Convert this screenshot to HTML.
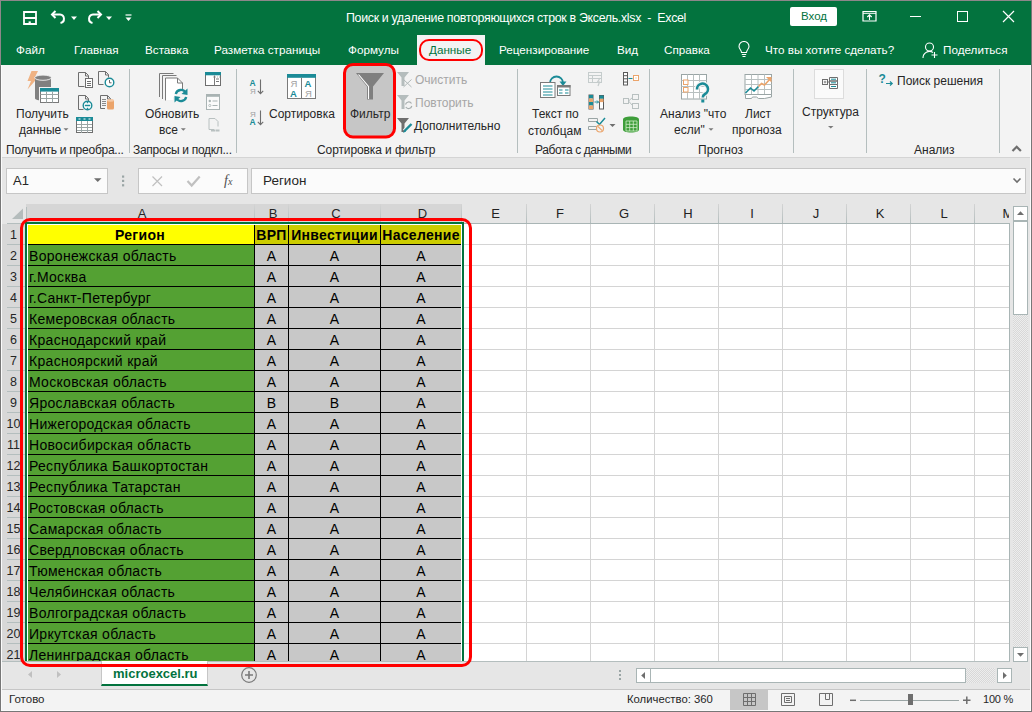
<!DOCTYPE html>
<html><head><meta charset="utf-8"><style>
*{box-sizing:border-box;margin:0;padding:0}
html,body{width:1032px;height:712px;overflow:hidden;background:#777;font-family:"Liberation Sans",sans-serif}
#win{position:absolute;left:0;top:0;width:1032px;height:712px}
.abs{position:absolute}
#title{position:absolute;left:1px;top:1px;width:1030px;height:34px;background:#03733e}
#tabs{position:absolute;left:1px;top:35px;width:1030px;height:30px;background:#03733e}
#ribbon{position:absolute;left:1px;top:65px;width:1030px;height:92px;background:#f3f3f3}
#ribline{position:absolute;left:1px;top:157px;width:1030px;height:1px;background:#d4d4d4}
#fbar{position:absolute;left:1px;top:158px;width:1030px;height:503px;background:#e6e6e6}
#sheetbar{position:absolute;left:1px;top:661px;width:1030px;height:28px;background:#e6e6e6}
#statline{position:absolute;left:1px;top:689px;width:1030px;height:1px;background:#c6c6c6}
#status{position:absolute;left:1px;top:690px;width:1030px;height:20px;background:#f3f3f3}
.t{position:absolute;white-space:pre;font-size:12px;line-height:14px}
.tw{color:#fff}
#gridwrap{position:absolute;left:0;top:0;width:1032px;height:712px}
.ch{position:absolute;top:204px;height:19px;overflow:hidden;background:#e6e6e6;color:#222;padding-left:3px;font-size:13px;line-height:19px;text-align:center}
.ch.sel{background:#d6d6d6;color:#262626}
.rh{position:absolute;left:1px;width:25px;height:21px;background:#d8d8d8;color:#262626;font-size:12.5px;line-height:23px;text-align:center}
.vl{position:absolute;top:224px;width:1px;height:437px;background:#d4d4d4}
.hl{position:absolute;left:26px;width:983px;height:1px;background:#d4d4d4}
.c{position:absolute;height:20px;font-size:14px;line-height:22px;letter-spacing:0.3px;white-space:pre;color:#000;overflow:hidden}
.hdrA{background:#ffff00;font-weight:bold;text-align:center}
.hdrB{background:#cccc00;font-weight:bold;text-align:center}
.ga{left:26px;width:228px;background:#54a133;padding-left:3px}
.gb{background:#c8c8c8;text-align:center}
.bv{position:absolute;top:225px;width:1px;height:436px;background:#000}
.bh{position:absolute;left:27px;width:434px;height:1px;background:#000}
#grid-bg{position:absolute;left:26px;top:224px;width:983px;height:437px;background:#fff}
#selbox{position:absolute;left:25px;top:222px;width:439px;height:439px;border:2px solid #03733e;border-bottom:none}
#selin{position:absolute;left:27px;top:224px;width:435px;height:437px;border:1px solid #fff;border-bottom:none}
#redbox{position:absolute;left:20px;top:218px;width:452px;height:449px;border:3px solid #ff0000;border-radius:10px}
.tab{top:43px;font-size:11.7px}
.rt{color:#262626;font-size:12px}
.hatch{background:repeating-conic-gradient(#d8d8d8 0 25%,#ededed 0 50%) 0 0/2px 2px}
.hdiv{position:absolute;top:204px;width:1px;height:19px;background:linear-gradient(#d4d4d4,#b4bebe)}
#edgeT{position:absolute;left:0;top:0;width:1032px;height:1px;background:#8d878a}
#edgeL{position:absolute;left:0;top:0;width:1px;height:66px;background:#8d878a}
.hiV{position:absolute;top:65px;width:1px;height:646px;background:#fbfbfb}
.hiH{position:absolute;left:1px;top:710px;width:1030px;height:1px;background:#fbfbfb}

</style></head><body>
<div id="win">
<div id="title"></div>
<div id="tabs"></div>
<!-- QAT -->
<svg class="abs" style="left:22px;top:10px" width="16" height="16" viewBox="0 0 16 16">
 <path d="M2 2h12v12h-12z" fill="none" stroke="#fff" stroke-width="1.8"/>
 <path d="M1.5 8h13" fill="none" stroke="#fff" stroke-width="2"/>
 <path d="M6.6 14v-2.6h2.2v2.6z" fill="#fff"/>
</svg>
<svg class="abs" style="left:50px;top:9px" width="18" height="16" viewBox="0 0 18 16">
 <path d="M5.5 2L2 5.5L5.5 9" fill="none" stroke="#fff" stroke-width="2"/>
 <path d="M2.5 5.5H10a4.3 4.3 0 0 1 0.5 8.5" fill="none" stroke="#fff" stroke-width="2"/>
</svg>
<svg class="abs" style="left:70px;top:16px" width="8" height="5" viewBox="0 0 8 5"><path d="M1 0.5h6L4 4z" fill="#fff"/></svg>
<svg class="abs" style="left:85px;top:9px" width="18" height="16" viewBox="0 0 18 16">
 <path d="M12.5 2L16 5.5L12.5 9" fill="none" stroke="#fff" stroke-width="2"/>
 <path d="M15.5 5.5H8a4.3 4.3 0 0 0 -0.5 8.5" fill="none" stroke="#fff" stroke-width="2"/>
</svg>
<svg class="abs" style="left:104.5px;top:16px" width="8" height="5" viewBox="0 0 8 5"><path d="M1 0.5h6L4 4z" fill="#fff"/></svg>
<svg class="abs" style="left:125px;top:14px" width="7" height="8" viewBox="0 0 7 8"><path d="M0.5 1h6" stroke="#fff" stroke-width="1.2"/><path d="M0.5 3.5h6L3.5 7z" fill="#fff"/></svg>
<div class="t tw" style="left:346px;top:11px;font-size:12.4px;letter-spacing:-0.32px">Поиск и удаление повторяющихся строк в Эксель.xlsx  -  Excel</div>
<div class="abs" style="left:790px;top:7px;width:47px;height:19px;background:#fff;border-radius:2px"></div>
<div class="t" style="left:801px;top:9px;font-size:11.5px;color:#03733e">Вход</div>
<svg class="abs" style="left:862px;top:10px" width="15" height="12" viewBox="0 0 15 12">
 <path d="M1 1.5h13v9.5h-13z" fill="none" stroke="#fff" stroke-width="1.2"/>
 <path d="M1 3.3h13" stroke="#fff" stroke-width="1"/>
 <path d="M7.5 10v-5M5.3 7l2.2-2.2L9.7 7" fill="none" stroke="#fff" stroke-width="1.1"/>
</svg>
<div class="abs" style="left:910px;top:16px;width:11px;height:1px;background:#fff"></div>
<div class="abs" style="left:957px;top:11px;width:11px;height:11px;border:1px solid #fff"></div>
<svg class="abs" style="left:1002px;top:10px" width="13" height="13" viewBox="0 0 13 13"><path d="M1 1L12 12M12 1L1 12" stroke="#fff" stroke-width="1.2"/></svg>
<!-- tabs -->
<div class="t tw tab" style="left:16px">Файл</div>
<div class="t tw tab" style="left:74px">Главная</div>
<div class="t tw tab" style="left:145px">Вставка</div>
<div class="t tw tab" style="left:214px">Разметка страницы</div>
<div class="t tw tab" style="left:348px">Формулы</div>
<div class="abs" style="left:417px;top:35px;width:68px;height:30px;background:#f3f3f3"></div>
<div class="t tab" style="left:429px;color:#03733e">Данные</div>
<div class="abs" style="left:419px;top:39px;width:64px;height:22px;border:2.5px solid #ff0000;border-radius:10px"></div>
<div class="t tw tab" style="left:499px">Рецензирование</div>
<div class="t tw tab" style="left:617px">Вид</div>
<div class="t tw tab" style="left:664px">Справка</div>
<svg class="abs" style="left:738px;top:41px" width="12" height="17" viewBox="0 0 12 17">
 <path d="M3.5 11.5C3.5 9 1 8 1 5.5a5 5 0 0 1 10 0C11 8 8.5 9 8.5 11.5z" fill="none" stroke="#fff" stroke-width="1.1"/>
 <path d="M3.8 13.5h4.4M4.5 15.5h3" stroke="#fff" stroke-width="1.1"/>
</svg>
<div class="t tw tab" style="left:765px">Что вы хотите сделать?</div>
<svg class="abs" style="left:922px;top:42px" width="17" height="17" viewBox="0 0 17 17">
 <circle cx="7.5" cy="5" r="4" fill="none" stroke="#fff" stroke-width="1.1"/>
 <path d="M1 16a6.5 6.5 0 0 1 10-5.5" fill="none" stroke="#fff" stroke-width="1.1"/>
 <path d="M12.5 10v6M9.5 13h6" stroke="#fff" stroke-width="1.1"/>
</svg>
<div class="t tw tab" style="left:943px">Поделиться</div>
<div id="ribbon"></div>
<div id="ribline"></div>
<svg class="abs" style="left:0;top:0" width="1032" height="160" viewBox="0 0 1032 160">
<!-- separators -->
<g fill="#b4bebe">
<rect x="129" y="69" width="1" height="84"/>
<rect x="236" y="69" width="1" height="84"/>
<rect x="517" y="69" width="1" height="84"/>
<rect x="649" y="69" width="1" height="84"/>
<rect x="793" y="69" width="1" height="84"/>
<rect x="866" y="69" width="1" height="84"/>
<rect x="999" y="69" width="1" height="84"/>
</g>
<!-- G1 big: lightning, cylinder, table -->
<path d="M31.5 71 L38 71 L34.5 78 L37.5 78 L27.5 89.5 L31 81 L27.5 81 Z" fill="#efb283"/>
<rect x="35" y="77.5" width="16" height="21" fill="#808080"/>
<ellipse cx="43" cy="98.5" rx="8" ry="2" fill="#808080"/>
<ellipse cx="43" cy="77.7" rx="8.3" ry="2.6" fill="#808080" stroke="#f3f3f3" stroke-width="0.9"/>
<rect x="39" y="87" width="21" height="17" fill="#f3f3f3"/>
<rect x="40.5" y="88.5" width="18" height="14" fill="#fff" stroke="#7a7a7a" stroke-width="1"/>
<rect x="40" y="88" width="19" height="3.6" fill="#1b8b97"/>
<path d="M46.5 91.5v11M52.5 91.5v11M40.5 94.5h18M40.5 98.5h18" stroke="#9aa5a5" stroke-width="1"/>
<!-- G1 small icons -->
<g fill="none" stroke="#6e6e6e" stroke-width="1">
 <path d="M84.5 86.5h-6v-14h7l3 3v2.5"/>
 <path d="M85.5 72.5v3.5h3"/>
 <path d="M103.5 84.5h-5v-13h7l3 3v3"/>
 <path d="M105.5 71.5v3.5h3"/>
 <path d="M83.5 109.5h-5v-14h7l3 3v2.5"/>
 <path d="M85.5 95.5v3.5h3"/>
 <path d="M105 108.5h-4.5v-13h7l3 3v3"/>
 <path d="M107.5 95.5v3.5h3"/>
</g>
<rect x="85.5" y="78.5" width="7" height="9" fill="#fff" stroke="#6e6e6e" stroke-width="1"/>
<path d="M87 81.5h4M87 83.5h4M87 85.5h4" stroke="#6e6e6e" stroke-width="1"/>
<path d="M102 99.5h4M102 101.5h4M102 103.5h4M102 105.5h4" stroke="#8a8a8a" stroke-width="1"/>
<circle cx="109.5" cy="82.5" r="4.3" fill="#fff" stroke="#1b8b97" stroke-width="1.4"/>
<path d="M109.5 80v2.8h2" fill="none" stroke="#555" stroke-width="0.9"/>
<circle cx="87.5" cy="105.5" r="4.3" fill="#fff" stroke="#1b8b97" stroke-width="1.4"/>
<path d="M84.8 105.5h5.4M87.5 101.8v1.5M87.5 107.8v1.5" stroke="#1b8b97" stroke-width="1.4"/>
<rect x="107" y="99.5" width="7" height="10" rx="1.5" fill="#eba46b"/>
<ellipse cx="110.5" cy="100.5" rx="3.5" ry="1.2" fill="#f5c9a5"/>
<rect x="76.5" y="117.5" width="16" height="15" fill="#fff" stroke="#6e6e6e" stroke-width="1"/>
<rect x="76" y="117" width="17" height="4" fill="#1b8b97"/>
<path d="M78.5 119h2M83.5 119h2M88.5 119h2" stroke="#fff" stroke-width="1"/>
<path d="M81.5 121v11.5M87.5 121v11.5M77 124.5h15M77 127.5h15M77 130.5h15" stroke="#9aa5a5" stroke-width="1" shape-rendering="crispEdges"/>
<!-- G2 big: stacked pages + refresh -->
<g fill="none" stroke="#7a7a7a" stroke-width="1">
 <path d="M159.5 97v-23.5h14"/>
 <path d="M162.5 99v-23.5h14"/>
 <path d="M165.5 100.5v-22.5h12l5 5v10" fill="#fff"/>
 <path d="M177.5 78v5h5"/>
</g>
<rect x="166" y="90" width="7" height="10" fill="#fff"/>
<circle cx="181" cy="95.5" r="6.8" fill="#f3f3f3"/>
<path d="M175.8 94 A5.3 5.3 0 0 1 185.5 92.5" fill="none" stroke="#1b8b97" stroke-width="2.3"/>
<path d="M186.2 97 A5.3 5.3 0 0 1 176.5 98.5" fill="none" stroke="#1b8b97" stroke-width="2.3"/>
<path d="M187.5 88.5 L187.5 95 L181.5 94 Z" fill="#1b8b97"/>
<path d="M174.5 102.5 L174.5 96 L180.5 97 Z" fill="#1b8b97"/>
<!-- G2 small -->
<rect x="205.5" y="72.5" width="15" height="13" fill="#fff" stroke="#6e6e6e" stroke-width="1"/>
<rect x="205" y="72" width="16" height="3.3" fill="#1b8b97"/>
<path d="M214.5 75.5v10M216 79h3M216 81.5h3" stroke="#7a7a7a" stroke-width="1"/>
<path d="M213 77h1M215 77h1M217 77h1M219 77h1" stroke="#999" stroke-width="0.8"/>
<rect x="206.5" y="94.5" width="13" height="15" fill="#fafafa" stroke="#a9b3b3" stroke-width="1"/>
<rect x="206" y="94" width="14" height="2.8" fill="#a9b3b3"/>
<circle cx="209.8" cy="101" r="1.2" fill="#a9b3b3"/>
<circle cx="209.8" cy="105.5" r="1.1" fill="none" stroke="#a9b3b3" stroke-width="0.8"/>
<path d="M212.5 101h5M212.5 105.5h5" stroke="#a9b3b3" stroke-width="1"/>
<path d="M214 129.5h-5v-11h6l3 3v5" fill="none" stroke="#b8c0c0" stroke-width="1"/>
<path d="M211 130.5h4M215.5 130.5h4" stroke="#b8c0c0" stroke-width="2"/>
<!-- G3 sort small -->
<g font-family="Liberation Sans" font-weight="bold" font-size="8.5">
 <text x="249.5" y="86" fill="#1b8b97">A</text>
 <text x="250" y="93.5" fill="#a0a0a0" font-weight="normal" font-size="8">Я</text>
 <text x="250" y="117.3" fill="#a0a0a0" font-weight="normal" font-size="8">Я</text>
 <text x="249.5" y="125" fill="#1b8b97">A</text>
</g>
<path d="M260.5 79.5v14M257.8 90.8l2.7 2.8l2.7-2.8" fill="none" stroke="#6e6e6e" stroke-width="1.1"/>
<path d="M260.5 110.5v14M257.8 121.8l2.7 2.8l2.7-2.8" fill="none" stroke="#6e6e6e" stroke-width="1.1"/>
<!-- G3 big sort -->
<rect x="287.5" y="74.5" width="28" height="24" fill="#fff" stroke="#7a7a7a" stroke-width="1"/>
<rect x="287" y="74" width="29" height="3.8" fill="#1b8b97"/>
<path d="M301.5 77.5v21" stroke="#7a7a7a" stroke-width="1"/>
<g font-family="Liberation Sans" font-size="9.5">
 <text x="290.5" y="87" fill="#a0a0a0">Я</text>
 <text x="290" y="97" fill="#1b8b97" font-weight="bold">A</text>
 <text x="304.5" y="87" fill="#1b8b97" font-weight="bold">A</text>
 <text x="305" y="97" fill="#a0a0a0">Я</text>
</g>
<!-- G3 filter button -->
<rect x="346" y="66" width="47" height="70" rx="5" fill="#c6c6c6"/>
<path d="M356 73h28l-11 13.5v13h-6v-13z" fill="#7f7f7f"/>
<path d="M358.5 74.5l10 12v12.5" fill="none" stroke="#fff" stroke-width="1.1"/>
<rect x="344.5" y="64.5" width="50" height="72.5" rx="8.5" fill="none" stroke="#ff0000" stroke-width="3"/>
<!-- G3 small filter icons -->
<path d="M397 72h12l-4.5 5.5v8.5h-3v-8.5z" fill="#b5bdbd"/>

<path d="M403.5 79.5l8 7.5M411.5 79.5l-8 7.5" stroke="#b0b8b8" stroke-width="1"/>
<path d="M397 95h12l-4.5 5.5v8.5h-3v-8.5z" fill="#b5bdbd"/>

<path d="M405.5 104.5a3.3 3.3 0 0 1 6 -1M411.8 106a3.3 3.3 0 0 1 -6 1" fill="none" stroke="#a6adad" stroke-width="1.2"/>
<path d="M397 118h12l-4.5 5.5v8.5h-3v-8.5z" fill="#6e6e6e"/>

<path d="M404.5 131l7-7" stroke="#f3f3f3" stroke-width="4.5"/><path d="M404.5 131l7-7" stroke="#1b8b97" stroke-width="2.4"/>
<path d="M403 133l1.5-3l1.5 1.5z" fill="#1b8b97"/>
<!-- G4 big text-to-columns -->
<path d="M550 83a6.5 6.5 0 0 1 13 0" fill="none" stroke="#1b8b97" stroke-width="1.8"/>
<path d="M559.5 81.5h7l-3.5 4.5z" fill="#1b8b97"/>
<rect x="540.5" y="82.5" width="14.5" height="15" fill="#fff" stroke="#7a7a7a" stroke-width="1"/>
<path d="M543 86h9.5M543 89h9.5M543 92h9.5M543 95h9.5" stroke="#1b8b97" stroke-width="1"/>
<rect x="557.5" y="85.5" width="12.5" height="10" fill="#fff" stroke="#7a7a7a" stroke-width="1"/>
<rect x="557" y="85" width="13.5" height="2.5" fill="#7a7a7a"/>
<path d="M559 90h3.5M565 90h3.5M559 93h3.5M565 93h3.5" stroke="#1b8b97" stroke-width="1"/>
<!-- G4 small col1 -->
<g fill="none" stroke="#c5cccc" stroke-width="1">
 <rect x="588.5" y="72.5" width="13" height="10"/>
 <path d="M588.5 75.5h13M588.5 78.5h13M592.5 75.5v7"/>
</g>
<path d="M600 78l-2.5 4h2l-1.5 4" fill="none" stroke="#c5cccc" stroke-width="1.2"/>
<rect x="589" y="95" width="4" height="14" fill="#fff" stroke="#5a5a5a" stroke-width="1"/>
<rect x="589" y="95" width="4" height="3.5" fill="#1b8b97"/>
<rect x="589" y="98.5" width="4" height="3.5" fill="#eba46b"/>
<rect x="589" y="102" width="4" height="3.5" fill="#1b8b97"/>
<rect x="589" y="105.5" width="4" height="3.5" fill="#eba46b"/>
<rect x="599.5" y="95.5" width="4" height="13.5" fill="#fff" stroke="#5a5a5a" stroke-width="1"/>
<rect x="599.5" y="95.5" width="4" height="3.3" fill="#1b8b97"/>
<rect x="599.5" y="98.8" width="4" height="3.3" fill="#eba46b"/>
<path d="M594.5 102h4M597 100.5l1.5 1.5l-1.5 1.5" fill="none" stroke="#1b8b97" stroke-width="1"/>
<path d="M588.5 118.5h9v3h-9zM588.5 126.5h8v3h-8z" fill="none" stroke="#9aa5a5" stroke-width="1"/>
<path d="M596.5 121.5l3 3l5.5-6.5" fill="none" stroke="#1b8b97" stroke-width="1.5"/>
<circle cx="600" cy="128.5" r="3.5" fill="none" stroke="#eba46b" stroke-width="1.2"/>
<path d="M597.8 126.3l4.4 4.4" stroke="#eba46b" stroke-width="1.2"/>
<path d="M609.5 124h6l-3 3z" fill="#6e6e6e"/>
<!-- G4 small col2 -->
<rect x="623.5" y="72.5" width="4" height="12.5" fill="#fff" stroke="#5a5a5a" stroke-width="1"/>
<path d="M623.5 75.7h4M623.5 78.8h4M623.5 82h4" stroke="#5a5a5a" stroke-width="1"/>
<path d="M628.5 78.5h4" stroke="#1b8b97" stroke-width="1"/>
<rect x="633.5" y="75.5" width="5" height="5" fill="#fff" stroke="#eba46b" stroke-width="1"/>
<rect x="635.5" y="77.5" width="1" height="1" fill="#eba46b"/>
<g fill="none" stroke="#b8c0c0" stroke-width="1">
 <rect x="623.5" y="98.5" width="5" height="5"/>
 <rect x="632.5" y="94.5" width="6" height="5"/>
 <rect x="632.5" y="103.5" width="6" height="5"/>
 <path d="M628.5 101l4-3.5M628.5 101l4 4.5"/>
</g>
<path d="M623 119.5c0-2 3-3 8-3s8 1 8 3v10c0 2-3 3-8 3s-8-1-8-3z" fill="#3e9e3a"/>
<path d="M626 121h11v10h-11z" fill="none" stroke="#d0ecc8" stroke-width="0.8"/>
<path d="M629.7 121v10M633.3 121v10M626 124.3h11M626 127.6h11" stroke="#d0ecc8" stroke-width="0.8"/>
<!-- G5 what-if -->
<rect x="681.5" y="74.5" width="25" height="24.5" fill="#fff" stroke="#9aa5a5" stroke-width="1"/>
<path d="M687.5 74.5v24.5M693.5 74.5v24.5M699.5 74.5v24.5M681.5 80.5h25M681.5 86.5h25M681.5 92.5h25" stroke="#b8c0c0" stroke-width="1"/>
<rect x="683.5" y="80" width="4.5" height="4.5" fill="#fff" stroke="#eba46b" stroke-width="1"/>
<rect x="683.5" y="87.5" width="4.5" height="4.5" fill="#fff" stroke="#eba46b" stroke-width="1"/>
<path d="M697 89.5a5.5 5.5 0 1 1 8 4.5c-1.8 1-2.2 1.8-2.2 3.5" fill="none" stroke="#f3f3f3" stroke-width="5"/>
<path d="M697 89.5a5.5 5.5 0 1 1 8 4.5c-1.8 1-2.2 1.8-2.2 3.5" fill="none" stroke="#1b8b97" stroke-width="2.6"/>
<rect x="701.3" y="99.5" width="3" height="3" fill="#1b8b97"/>
<!-- G5 forecast -->
<rect x="745" y="74.5" width="26.5" height="20" fill="#fff" stroke="#9aa5a5" stroke-width="1"/>
<path d="M751.5 74.5v20M758 74.5v20M764.5 74.5v20M745 79.5h26.5M745 84.5h26.5M745 89.5h26.5" stroke="#b8c0c0" stroke-width="1"/>
<path d="M745.5 94.5h26v2.5l-7 1.5h-6l-2-1.5h-4l-1 1.5h-6z" fill="#fff" stroke="#9aa5a5" stroke-width="1"/>
<path d="M745.5 93l5-5l3.5 3l4.5-4.5" fill="none" stroke="#1b8b97" stroke-width="1.6"/>
<path d="M758.5 86.5l3-3l3 1.5l6-6.5" fill="none" stroke="#eba46b" stroke-width="1.6"/>
<path d="M766 77h5.5v5.5z" fill="#eba46b"/>
<!-- G6 structure -->
<rect x="814.5" y="69.5" width="29" height="29" fill="#fafafa" stroke="#dcdcdc" stroke-width="1"/>
<rect x="822.5" y="79.5" width="5" height="5" fill="none" stroke="#6e6e6e" stroke-width="1"/>
<path d="M823.8 82h2.5M825 80.8v2.5" stroke="#6e6e6e" stroke-width="0.8"/>
<path d="M827.5 82h2" stroke="#6e6e6e" stroke-width="1"/>
<path d="M829.5 77.5h8v3.5h-8zM829.5 81h8v3.5h-8zM829.5 84.5h8v4h-8z" fill="#fff" stroke="#6e6e6e" stroke-width="1"/>
<path d="M831 79.2h5M831 82.8h5M831 86.5h5" stroke="#1b8b97" stroke-width="1"/>
<path d="M828 126h5.5l-2.75 2.5z" fill="#7a7a7a"/>
<!-- G7 solver -->
<text x="878.5" y="83" font-family="Liberation Sans" font-weight="bold" font-size="12" fill="#1b8b97">?</text>
<path d="M886 83.5h6M890 81.5l2.2 2l-2.2 2" fill="none" stroke="#1b8b97" stroke-width="1.2"/>
<!-- collapse chevron -->
<path d="M1012.5 151l4.2-4.2l4.2 4.2" fill="none" stroke="#6e6e6e" stroke-width="2.2"/>
<!-- dropdown triangles -->
<path d="M63.5 128.3h5l-2.5 2.5z" fill="#7a7a7a"/>
<path d="M180.8 128.3h5l-2.5 2.5z" fill="#7a7a7a"/>
<path d="M708.5 128.3h5l-2.5 2.5z" fill="#7a7a7a"/>
</svg>
<div class="t rt" style="left:16px;top:107px">Получить</div>
<div class="t rt" style="left:19px;top:123px">данные</div>
<div class="t rt" style="left:6px;top:143px;letter-spacing:-0.25px">Получить и преобра...</div>
<div class="t rt" style="left:145px;top:107px">Обновить</div>
<div class="t rt" style="left:159px;top:123px">все</div>
<div class="t rt" style="left:133px;top:143px;letter-spacing:-0.3px">Запросы и подкл...</div>
<div class="t rt" style="left:269px;top:107px">Сортировка</div>
<div class="t rt" style="left:350px;top:107px">Фильтр</div>
<div class="t rt" style="left:415px;top:73px;color:#a6a6a6">Очистить</div>
<div class="t rt" style="left:415px;top:96px;color:#a6a6a6">Повторить</div>
<div class="t rt" style="left:414px;top:119px">Дополнительно</div>
<div class="t rt" style="left:317px;top:143px;letter-spacing:-0.1px">Сортировка и фильтр</div>
<div class="t rt" style="left:532px;top:107px">Текст по</div>
<div class="t rt" style="left:528px;top:124px">столбцам</div>
<div class="t rt" style="left:535px;top:143px;letter-spacing:-0.4px">Работа с данными</div>
<div class="t rt" style="left:660px;top:107px">Анализ "что</div>
<div class="t rt" style="left:674px;top:123px">если"</div>
<div class="t rt" style="left:745px;top:107px">Лист</div>
<div class="t rt" style="left:732px;top:123px">прогноза</div>
<div class="t rt" style="left:698px;top:143px">Прогноз</div>
<div class="t rt" style="left:802px;top:105px">Структура</div>
<div class="t rt" style="left:897px;top:74px">Поиск решения</div>
<div class="t rt" style="left:914px;top:143px">Анализ</div>

<div id="fbar"></div>
<div id="grid-bg"></div>
<!-- formula bar -->
<div class="abs" style="left:6px;top:168px;width:102px;height:26px;background:#fbfbfb;border:1px solid #c6c6c6"></div>
<div class="t" style="left:13px;top:174px;font-size:13px;color:#262626">A1</div>

<div class="abs" style="left:138px;top:168px;width:110px;height:26px;background:#fbfbfb;border:1px solid #c6c6c6"></div>
<div class="t" style="left:224px;top:174px;font-family:'Liberation Serif',serif;font-style:italic;font-size:14px;color:#505050">f<span style="font-size:10px;letter-spacing:-0.5px">x</span></div>
<div class="abs" style="left:251px;top:168px;width:775px;height:26px;background:#fbfbfb;border:1px solid #c6c6c6"></div>
<div class="t" style="left:263px;top:174px;font-size:13.5px;color:#262626">Регион</div>
<svg class="abs" style="left:0;top:160px" width="1032" height="40" viewBox="0 160 1032 40">
 <path d="M94 178.3h7.5l-3.75 3.7z" fill="#6e6e6e"/>
 <rect x="122" y="175.5" width="2.2" height="2.2" fill="#9aa5a5"/>
 <rect x="122" y="179.8" width="2.2" height="2.2" fill="#9aa5a5"/>
 <rect x="122" y="184.2" width="2.2" height="2.2" fill="#9aa5a5"/>
 <path d="M152.5 176.5l9.5 9.5M162 176.5l-9.5 9.5" stroke="#c0c0c0" stroke-width="1.2"/>
 <path d="M187.5 181l4.2 4.5l8-9" fill="none" stroke="#c0c0c0" stroke-width="2.2"/>
 <path d="M1013.5 178.5l3.5 3.5l3.5-3.5" fill="none" stroke="#6e6e6e" stroke-width="1.6"/>
</svg>

<div id="sheetbar"></div>
<div id="statline"></div>
<svg class="abs" style="left:0;top:660px" width="1032" height="52" viewBox="0 660 1032 52">
 <path d="M32 671v7l-4-3.5z" fill="#c0c0c0"/>
 <path d="M57 671v7l4-3.5z" fill="#c0c0c0"/>
 <circle cx="249" cy="675" r="7.3" fill="none" stroke="#7a7a7a" stroke-width="1.2"/>
 <path d="M245 675h8M249 671v8" stroke="#7a7a7a" stroke-width="1.6"/>
 <rect x="619" y="670" width="2" height="2" fill="#9aa5a5"/>
 <rect x="619" y="674" width="2" height="2" fill="#9aa5a5"/>
 <rect x="619" y="678" width="2" height="2" fill="#9aa5a5"/>
</svg>
<div class="abs" style="left:1px;top:661px;width:1009px;height:1px;background:#b4bebe"></div>
<div class="abs" style="left:101px;top:661px;width:107px;height:25px;background:#fff;border-left:1px solid #c6c6c6;border-right:1px solid #c6c6c6;border-bottom:2px solid #03733e"></div>
<div class="t" style="left:113px;top:667px;font-size:13px;font-weight:bold;color:#03733e">microexcel.ru</div>
<!-- hscroll -->
<div class="abs" style="left:636px;top:668px;width:15px;height:15px;background:#fff;border:1px solid #a9b5b5"></div>
<svg class="abs" style="left:636px;top:668px" width="15" height="15" viewBox="0 0 15 15"><path d="M9 4v7l-3.8-3.5z" fill="#6e6e6e"/></svg>
<div class="abs" style="left:650px;top:668px;width:316px;height:15px;background:#fff;border:1px solid #a9b5b5"></div>
<div class="abs hatch" style="left:966px;top:668px;width:29px;height:15px"></div>
<div class="abs" style="left:997px;top:668px;width:15px;height:15px;background:#fff;border:1px solid #a9b5b5"></div>
<svg class="abs" style="left:997px;top:668px" width="15" height="15" viewBox="0 0 15 15"><path d="M6 4v7l3.8-3.5z" fill="#6e6e6e"/></svg>
<!-- vscroll -->
<div class="abs" style="left:1013px;top:206px;width:15px;height:15px;background:#fff;border:1px solid #a9b5b5"></div>
<svg class="abs" style="left:1013px;top:206px" width="15" height="15" viewBox="0 0 15 15"><path d="M4 9h7l-3.5-3.8z" fill="#6e6e6e"/></svg>
<div class="abs" style="left:1013px;top:221px;width:15px;height:94px;background:#fff;border:1px solid #a9b5b5"></div>
<div class="abs hatch" style="left:1013px;top:315px;width:15px;height:332px"></div>
<div class="abs" style="left:1013px;top:647px;width:15px;height:15px;background:#fff;border:1px solid #a9b5b5"></div>
<svg class="abs" style="left:1013px;top:647px" width="15" height="15" viewBox="0 0 15 15"><path d="M4 6h7l-3.5 3.8z" fill="#6e6e6e"/></svg>

<div id="status"></div>
<div class="t" style="left:9px;top:692px;font-size:11.5px;color:#262626">Готово</div>
<div class="t" style="left:627px;top:692px;font-size:11.3px;color:#262626">Количество: 360</div>
<div class="abs" style="left:730px;top:690px;width:38px;height:20px;background:#c6c6c6"></div>
<svg class="abs" style="left:0;top:688px" width="1032" height="24" viewBox="0 688 1032 24">
 <path d="M743.5 693.5h12v12h-12zM747.5 693.5v12M751.5 693.5v12M743.5 697.5h12M743.5 701.5h12" fill="none" stroke="#6e6e6e" stroke-width="1"/>
 <path d="M781.5 693.5h13v12h-13z" fill="none" stroke="#6e6e6e" stroke-width="1"/>
 <path d="M784.5 696.5h7v6h-7zM786 698.5h4M786 700.5h4" fill="none" stroke="#6e6e6e" stroke-width="1"/>
 <path d="M819.5 693.5h13v12h-13zM825.5 693.5v6h4v-6" fill="none" stroke="#6e6e6e" stroke-width="1"/>
 <path d="M850 700.3h6" stroke="#6e6e6e" stroke-width="1.5"/>
 <path d="M860 700.5h99" stroke="#9aa5a5" stroke-width="1"/>
 <rect x="908" y="694" width="5" height="11" fill="#6e6e6e"/>
 <path d="M963 700.3h7.5M966.8 696.5v7.5" stroke="#6e6e6e" stroke-width="1.5"/>
</svg>
<div class="t" style="left:983px;top:692px;font-size:11px;letter-spacing:-0.2px;color:#262626">100 %</div>


<div id="gridwrap">
<div class="ch sel" style="left:26px;width:228px"><span style="position:absolute;left:2px;width:228px;text-align:center">A</span></div>
<div class="ch sel" style="left:254px;width:34px"><span style="position:absolute;left:2px;width:34px;text-align:center">B</span></div>
<div class="ch sel" style="left:288px;width:92px"><span style="position:absolute;left:2px;width:92px;text-align:center">C</span></div>
<div class="ch sel" style="left:380px;width:81px"><span style="position:absolute;left:2px;width:81px;text-align:center">D</span></div>
<div class="ch" style="left:461px;width:65px"><span style="position:absolute;left:2px;width:65px;text-align:center">E</span></div>
<div class="ch" style="left:526px;width:64px"><span style="position:absolute;left:2px;width:64px;text-align:center">F</span></div>
<div class="ch" style="left:590px;width:64px"><span style="position:absolute;left:2px;width:64px;text-align:center">G</span></div>
<div class="ch" style="left:654px;width:64px"><span style="position:absolute;left:2px;width:64px;text-align:center">H</span></div>
<div class="ch" style="left:718px;width:64px"><span style="position:absolute;left:2px;width:64px;text-align:center">I</span></div>
<div class="ch" style="left:782px;width:64px"><span style="position:absolute;left:2px;width:64px;text-align:center">J</span></div>
<div class="ch" style="left:846px;width:64px"><span style="position:absolute;left:2px;width:64px;text-align:center">K</span></div>
<div class="ch" style="left:910px;width:64px"><span style="position:absolute;left:2px;width:64px;text-align:center">L</span></div>
<div class="ch" style="left:974px;width:35px"><span style="position:absolute;left:2px;width:64px;text-align:center">M</span></div>
<div class="hdiv" style="left:254px"></div>
<div class="hdiv" style="left:288px"></div>
<div class="hdiv" style="left:380px"></div>
<div class="hdiv" style="left:461px"></div>
<div class="hdiv" style="left:526px"></div>
<div class="hdiv" style="left:590px"></div>
<div class="hdiv" style="left:654px"></div>
<div class="hdiv" style="left:718px"></div>
<div class="hdiv" style="left:782px"></div>
<div class="hdiv" style="left:846px"></div>
<div class="hdiv" style="left:910px"></div>
<div class="hdiv" style="left:974px"></div>
<div class="abs" style="left:26px;top:223px;width:984px;height:1px;background:#a9b5b5"></div>
<svg class="abs" style="left:0;top:200px" width="30" height="26" viewBox="0 200 30 26"><path d="M23 208.5v10.5h-11z" fill="#b4bcbc"/><rect x="7" y="223" width="19" height="1" fill="#b4bebe"/><rect x="26" y="207" width="1" height="16" fill="#b4bebe"/></svg>
<div class="abs" style="left:1009px;top:223px;width:1px;height:438px;background:#a9b5b5"></div>
<div class="rh" style="top:224px">1</div>
<div class="abs" style="left:7px;top:244px;width:19px;height:1px;background:#b4bebe"></div>
<div class="rh" style="top:245px">2</div>
<div class="abs" style="left:7px;top:265px;width:19px;height:1px;background:#b4bebe"></div>
<div class="rh" style="top:266px">3</div>
<div class="abs" style="left:7px;top:286px;width:19px;height:1px;background:#b4bebe"></div>
<div class="rh" style="top:287px">4</div>
<div class="abs" style="left:7px;top:307px;width:19px;height:1px;background:#b4bebe"></div>
<div class="rh" style="top:308px">5</div>
<div class="abs" style="left:7px;top:328px;width:19px;height:1px;background:#b4bebe"></div>
<div class="rh" style="top:329px">6</div>
<div class="abs" style="left:7px;top:349px;width:19px;height:1px;background:#b4bebe"></div>
<div class="rh" style="top:350px">7</div>
<div class="abs" style="left:7px;top:370px;width:19px;height:1px;background:#b4bebe"></div>
<div class="rh" style="top:371px">8</div>
<div class="abs" style="left:7px;top:391px;width:19px;height:1px;background:#b4bebe"></div>
<div class="rh" style="top:392px">9</div>
<div class="abs" style="left:7px;top:412px;width:19px;height:1px;background:#b4bebe"></div>
<div class="rh" style="top:413px">10</div>
<div class="abs" style="left:7px;top:433px;width:19px;height:1px;background:#b4bebe"></div>
<div class="rh" style="top:434px">11</div>
<div class="abs" style="left:7px;top:454px;width:19px;height:1px;background:#b4bebe"></div>
<div class="rh" style="top:455px">12</div>
<div class="abs" style="left:7px;top:475px;width:19px;height:1px;background:#b4bebe"></div>
<div class="rh" style="top:476px">13</div>
<div class="abs" style="left:7px;top:496px;width:19px;height:1px;background:#b4bebe"></div>
<div class="rh" style="top:497px">14</div>
<div class="abs" style="left:7px;top:517px;width:19px;height:1px;background:#b4bebe"></div>
<div class="rh" style="top:518px">15</div>
<div class="abs" style="left:7px;top:538px;width:19px;height:1px;background:#b4bebe"></div>
<div class="rh" style="top:539px">16</div>
<div class="abs" style="left:7px;top:559px;width:19px;height:1px;background:#b4bebe"></div>
<div class="rh" style="top:560px">17</div>
<div class="abs" style="left:7px;top:580px;width:19px;height:1px;background:#b4bebe"></div>
<div class="rh" style="top:581px">18</div>
<div class="abs" style="left:7px;top:601px;width:19px;height:1px;background:#b4bebe"></div>
<div class="rh" style="top:602px">19</div>
<div class="abs" style="left:7px;top:622px;width:19px;height:1px;background:#b4bebe"></div>
<div class="rh" style="top:623px">20</div>
<div class="abs" style="left:7px;top:643px;width:19px;height:1px;background:#b4bebe"></div>
<div class="rh" style="top:644px;height:17px">21</div>
<div class="vl" style="left:461px"></div>
<div class="vl" style="left:526px"></div>
<div class="vl" style="left:590px"></div>
<div class="vl" style="left:654px"></div>
<div class="vl" style="left:718px"></div>
<div class="vl" style="left:782px"></div>
<div class="vl" style="left:846px"></div>
<div class="vl" style="left:910px"></div>
<div class="vl" style="left:974px"></div>
<div class="hl" style="top:244px"></div>
<div class="hl" style="top:265px"></div>
<div class="hl" style="top:286px"></div>
<div class="hl" style="top:307px"></div>
<div class="hl" style="top:328px"></div>
<div class="hl" style="top:349px"></div>
<div class="hl" style="top:370px"></div>
<div class="hl" style="top:391px"></div>
<div class="hl" style="top:412px"></div>
<div class="hl" style="top:433px"></div>
<div class="hl" style="top:454px"></div>
<div class="hl" style="top:475px"></div>
<div class="hl" style="top:496px"></div>
<div class="hl" style="top:517px"></div>
<div class="hl" style="top:538px"></div>
<div class="hl" style="top:559px"></div>
<div class="hl" style="top:580px"></div>
<div class="hl" style="top:601px"></div>
<div class="hl" style="top:622px"></div>
<div class="hl" style="top:643px"></div>
<div class="c hdrA" style="left:26px;top:224px;width:228px">Регион</div>
<div class="c hdrB" style="left:255px;top:224px;width:33px">ВРП</div>
<div class="c hdrB" style="left:289px;top:224px;width:91px">Инвестиции</div>
<div class="c hdrB" style="left:381px;top:224px;width:80px">Население</div>
<div class="c ga" style="top:245px">Воронежская область</div>
<div class="c gb" style="left:255px;top:245px;width:33px">А</div>
<div class="c gb" style="left:289px;top:245px;width:91px">А</div>
<div class="c gb" style="left:381px;top:245px;width:80px">А</div>
<div class="c ga" style="top:266px">г.Москва</div>
<div class="c gb" style="left:255px;top:266px;width:33px">А</div>
<div class="c gb" style="left:289px;top:266px;width:91px">А</div>
<div class="c gb" style="left:381px;top:266px;width:80px">А</div>
<div class="c ga" style="top:287px">г.Санкт-Петербург</div>
<div class="c gb" style="left:255px;top:287px;width:33px">А</div>
<div class="c gb" style="left:289px;top:287px;width:91px">А</div>
<div class="c gb" style="left:381px;top:287px;width:80px">А</div>
<div class="c ga" style="top:308px">Кемеровская область</div>
<div class="c gb" style="left:255px;top:308px;width:33px">А</div>
<div class="c gb" style="left:289px;top:308px;width:91px">А</div>
<div class="c gb" style="left:381px;top:308px;width:80px">А</div>
<div class="c ga" style="top:329px">Краснодарский край</div>
<div class="c gb" style="left:255px;top:329px;width:33px">А</div>
<div class="c gb" style="left:289px;top:329px;width:91px">А</div>
<div class="c gb" style="left:381px;top:329px;width:80px">А</div>
<div class="c ga" style="top:350px">Красноярский край</div>
<div class="c gb" style="left:255px;top:350px;width:33px">А</div>
<div class="c gb" style="left:289px;top:350px;width:91px">А</div>
<div class="c gb" style="left:381px;top:350px;width:80px">А</div>
<div class="c ga" style="top:371px">Московская область</div>
<div class="c gb" style="left:255px;top:371px;width:33px">А</div>
<div class="c gb" style="left:289px;top:371px;width:91px">А</div>
<div class="c gb" style="left:381px;top:371px;width:80px">А</div>
<div class="c ga" style="top:392px">Ярославская область</div>
<div class="c gb" style="left:255px;top:392px;width:33px">В</div>
<div class="c gb" style="left:289px;top:392px;width:91px">В</div>
<div class="c gb" style="left:381px;top:392px;width:80px">А</div>
<div class="c ga" style="top:413px">Нижегородская область</div>
<div class="c gb" style="left:255px;top:413px;width:33px">А</div>
<div class="c gb" style="left:289px;top:413px;width:91px">А</div>
<div class="c gb" style="left:381px;top:413px;width:80px">А</div>
<div class="c ga" style="top:434px">Новосибирская область</div>
<div class="c gb" style="left:255px;top:434px;width:33px">А</div>
<div class="c gb" style="left:289px;top:434px;width:91px">А</div>
<div class="c gb" style="left:381px;top:434px;width:80px">А</div>
<div class="c ga" style="top:455px">Республика Башкортостан</div>
<div class="c gb" style="left:255px;top:455px;width:33px">А</div>
<div class="c gb" style="left:289px;top:455px;width:91px">А</div>
<div class="c gb" style="left:381px;top:455px;width:80px">А</div>
<div class="c ga" style="top:476px">Республика Татарстан</div>
<div class="c gb" style="left:255px;top:476px;width:33px">А</div>
<div class="c gb" style="left:289px;top:476px;width:91px">А</div>
<div class="c gb" style="left:381px;top:476px;width:80px">А</div>
<div class="c ga" style="top:497px">Ростовская область</div>
<div class="c gb" style="left:255px;top:497px;width:33px">А</div>
<div class="c gb" style="left:289px;top:497px;width:91px">А</div>
<div class="c gb" style="left:381px;top:497px;width:80px">А</div>
<div class="c ga" style="top:518px">Самарская область</div>
<div class="c gb" style="left:255px;top:518px;width:33px">А</div>
<div class="c gb" style="left:289px;top:518px;width:91px">А</div>
<div class="c gb" style="left:381px;top:518px;width:80px">А</div>
<div class="c ga" style="top:539px">Свердловская область</div>
<div class="c gb" style="left:255px;top:539px;width:33px">А</div>
<div class="c gb" style="left:289px;top:539px;width:91px">А</div>
<div class="c gb" style="left:381px;top:539px;width:80px">А</div>
<div class="c ga" style="top:560px">Тюменская область</div>
<div class="c gb" style="left:255px;top:560px;width:33px">А</div>
<div class="c gb" style="left:289px;top:560px;width:91px">А</div>
<div class="c gb" style="left:381px;top:560px;width:80px">А</div>
<div class="c ga" style="top:581px">Челябинская область</div>
<div class="c gb" style="left:255px;top:581px;width:33px">А</div>
<div class="c gb" style="left:289px;top:581px;width:91px">А</div>
<div class="c gb" style="left:381px;top:581px;width:80px">А</div>
<div class="c ga" style="top:602px">Волгоградская область</div>
<div class="c gb" style="left:255px;top:602px;width:33px">А</div>
<div class="c gb" style="left:289px;top:602px;width:91px">А</div>
<div class="c gb" style="left:381px;top:602px;width:80px">А</div>
<div class="c ga" style="top:623px">Иркутская область</div>
<div class="c gb" style="left:255px;top:623px;width:33px">А</div>
<div class="c gb" style="left:289px;top:623px;width:91px">А</div>
<div class="c gb" style="left:381px;top:623px;width:80px">А</div>
<div class="c ga" style="top:644px;height:17px">Ленинградская область</div>
<div class="c gb" style="left:255px;top:644px;width:33px;height:17px">А</div>
<div class="c gb" style="left:289px;top:644px;width:91px;height:17px">А</div>
<div class="c gb" style="left:381px;top:644px;width:80px;height:17px">А</div>
<div class="bv" style="left:254px"></div>
<div class="bv" style="left:288px"></div>
<div class="bv" style="left:380px"></div>
<div class="bh" style="top:244px"></div>
<div class="bh" style="top:265px"></div>
<div class="bh" style="top:286px"></div>
<div class="bh" style="top:307px"></div>
<div class="bh" style="top:328px"></div>
<div class="bh" style="top:349px"></div>
<div class="bh" style="top:370px"></div>
<div class="bh" style="top:391px"></div>
<div class="bh" style="top:412px"></div>
<div class="bh" style="top:433px"></div>
<div class="bh" style="top:454px"></div>
<div class="bh" style="top:475px"></div>
<div class="bh" style="top:496px"></div>
<div class="bh" style="top:517px"></div>
<div class="bh" style="top:538px"></div>
<div class="bh" style="top:559px"></div>
<div class="bh" style="top:580px"></div>
<div class="bh" style="top:601px"></div>
<div class="bh" style="top:622px"></div>
<div class="bh" style="top:643px"></div>
</div>
<div id="selin"></div>
<div id="selbox"></div>
<div id="redbox"></div>
<div id="edgeT"></div><div id="edgeL"></div><div class="hiV" style="left:1px"></div><div class="hiV" style="left:1030px"></div><div class="hiH"></div>
</div>
</body></html>
